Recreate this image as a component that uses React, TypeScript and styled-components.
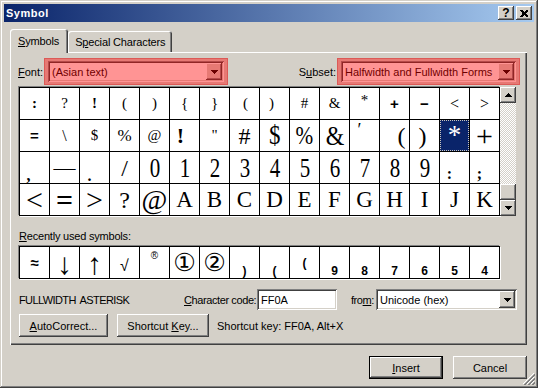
import React from 'react'
import styled, { createGlobalStyle, css } from 'styled-components'

const GlobalStyle = createGlobalStyle`
  html, body {
    margin: 0;
    padding: 0;
    background: #d4d0c8;
  }
  body {
    font-family: 'Liberation Sans', Arial, sans-serif;
    font-size: 11px;
    color: #000;
    white-space: nowrap;
  }
`

const raised = css`
  background: #d4d0c8;
  box-shadow: inset -1px -1px #404040, inset 1px 1px #fff, inset -2px -2px #808080, inset 2px 2px #d4d0c8;
`

const sunken = css`
  box-shadow: inset 1px 1px #808080, inset -1px -1px #fff, inset 2px 2px #404040, inset -2px -2px #d4d0c8;
`

const Window = styled.div`
  position: relative;
  box-sizing: border-box;
  width: 538px;
  height: 388px;
  padding: 4px;
  display: flex;
  flex-direction: column;
  background: #d4d0c8;
  box-shadow: inset -1px -1px #404040, inset 1px 1px #d4d0c8, inset -2px -2px #808080, inset 2px 2px #fff;
`

const TitleBar = styled.div`
  height: 18px;
  padding: 0 2px;
  display: flex;
  align-items: center;
  justify-content: space-between;
  background: linear-gradient(to right, #0a246a, #a6caf0);
`

const Title = styled.span`
  color: #fff;
  font-weight: bold;
  font-size: 11px;
  letter-spacing: 0.5px;
`

const TitleButtons = styled.div`
  display: flex;
  gap: 2px;
`

const TitleButton = styled.div`
  box-sizing: border-box;
  width: 16px;
  height: 14px;
  ${raised};
  display: flex;
  align-items: center;
  justify-content: center;
  font-weight: bold;
  font-size: 12px;
  line-height: 1;
`

const Body = styled.div`
  flex: 1;
  display: flex;
  flex-direction: column;
  padding: 7px 7px 0 6px;
`

const TabStrip = styled.div`
  position: relative;
  z-index: 1;
  height: 23px;
  display: flex;
  align-items: flex-end;
`

const Tab = styled.div<{ $active?: boolean }>`
  box-sizing: border-box;
  height: ${(p) => (p.$active ? 24 : 21)}px;
  margin-bottom: ${(p) => (p.$active ? -1 : 0)}px;
  padding: ${(p) => (p.$active ? '0 9px 1px 8px' : '0 7px 0 7px')};
  display: flex;
  align-items: center;
  letter-spacing: -0.15px;
  background: #d4d0c8;
  border-radius: 3px 3px 0 0;
  box-shadow: inset 1px 1px #fff, inset -1px 0 #404040, inset -2px 0 #808080;
`

const Panel = styled.div`
  box-sizing: border-box;
  width: 517px;
  height: 293px;
  padding: 6px 7px 0 8px;
  display: flex;
  flex-direction: column;
  box-shadow: inset 1px 1px #fff, inset -1px -1px #404040, inset -2px -2px #808080;
`

const Key = styled.span`
  text-decoration: underline;
`

const FontRow = styled.div`
  height: 27px;
  display: flex;
  align-items: center;
  justify-content: space-between;
`

const Field = styled.div`
  display: flex;
  align-items: center;
`

const Highlight = styled.div<{ $w: number }>`
  position: relative;
  box-sizing: border-box;
  width: ${(p) => p.$w}px;
  height: 27px;
  padding: 3px 4px 3px 4px;
  margin-left: 1px;

  &::after {
    content: '';
    position: absolute;
    inset: 0;
    background: rgba(255, 0, 0, 0.42);
    box-shadow: inset 0 0 0 1px rgba(190, 0, 0, 0.25);
    pointer-events: none;
  }
`

const Combo = styled.div<{ $w?: number }>`
  box-sizing: border-box;
  width: ${(p) => (p.$w ? `${p.$w}px` : '100%')};
  height: 21px;
  padding: 2px 2px 2px 4px;
  display: flex;
  align-items: center;
  justify-content: space-between;
  background: #fff;
  ${sunken};
`

const DropButton = styled.div`
  box-sizing: border-box;
  width: 16px;
  height: 17px;
  ${raised};
  display: flex;
  align-items: center;
  justify-content: center;
`

const GridArea = styled.div`
  margin: 2px 0 0 1px;
  display: flex;
`

const SymbolGrid = styled.div`
  display: grid;
  grid-template-columns: repeat(16, 29px);
  grid-auto-rows: 31px;
  gap: 1px;
  padding: 1px;
  background: #000;
  box-shadow: -1px -1px 0 #808080, 1px 1px 0 #fff;
`

const Cell = styled.div<{ $size: number; $sans?: boolean; $bold?: boolean; $sel?: boolean }>`
  display: flex;
  align-items: center;
  justify-content: center;
  overflow: hidden;
  background: ${(p) => (p.$sel ? '#0a246a' : '#fff')};
  color: ${(p) => (p.$sel ? '#fff' : '#000')};
  outline: ${(p) => (p.$sel ? '1px dotted #c8c4bc' : 'none')};
  outline-offset: -1px;
  font-family: ${(p) =>
    p.$sans
      ? "'Liberation Sans', 'DejaVu Sans', sans-serif"
      : "'Liberation Serif', 'DejaVu Serif', 'DejaVu Sans', 'Noto Sans CJK JP', serif"};
  font-size: ${(p) => p.$size}px;
  font-weight: ${(p) => (p.$bold ? 700 : 400)};
  line-height: 1;
`

const Glyph = styled.span`
  display: block;
`

const ScrollBar = styled.div`
  width: 16px;
  display: flex;
  flex-direction: column;
`

const ScrollButton = styled.div`
  box-sizing: border-box;
  width: 16px;
  height: 16px;
  ${raised};
  display: flex;
  align-items: center;
  justify-content: center;
`

const ScrollTrack = styled.div`
  flex: 1;
  background: repeating-conic-gradient(#fff 0 25%, #d4d0c8 0 50%) 0 0 / 2px 2px;
`

const SectionLabel = styled.div`
  margin: 14px 0 0 1px;
  line-height: 13px;
  letter-spacing: -0.2px;
`

const RecentWrap = styled.div`
  margin: 3px 0 0 1px;
  display: flex;
`

const InfoRow = styled.div`
  margin: 10px 0 0 1px;
  height: 21px;
  display: flex;
  align-items: center;
`

const CharName = styled.div`
  width: 165px;
  letter-spacing: -0.6px;
  word-spacing: 2px;
`

const FieldLabel = styled.div<{ $w: number; $right?: boolean }>`
  box-sizing: border-box;
  width: ${(p) => p.$w}px;
  text-align: ${(p) => (p.$right ? 'right' : 'left')};
  padding-right: ${(p) => (p.$right ? 2 : 0)}px;
  letter-spacing: -0.4px;
`

const TextBox = styled.div`
  box-sizing: border-box;
  width: 80px;
  height: 21px;
  padding: 0 4px;
  display: flex;
  align-items: center;
  background: #fff;
  ${sunken};
`

const ButtonRow = styled.div`
  margin: 4px 0 0 1px;
  display: flex;
  align-items: center;
`

const Button = styled.div<{ $w: number; $default?: boolean; $gap?: number }>`
  box-sizing: border-box;
  width: ${(p) => p.$w}px;
  height: 23px;
  margin-left: ${(p) => p.$gap ?? 0}px;
  display: flex;
  align-items: center;
  justify-content: center;
  background: #d4d0c8;
  box-shadow: ${(p) =>
    p.$default
      ? 'inset 0 0 0 1px #000, inset -2px -2px #404040, inset 2px 2px #fff, inset -3px -3px #808080'
      : 'inset -1px -1px #404040, inset 1px 1px #fff, inset -2px -2px #808080, inset 2px 2px #d4d0c8'};
`

const ShortcutText = styled.div`
  margin-left: 8px;
`

const Footer = styled.div`
  margin-top: 11px;
  display: flex;
  justify-content: flex-end;
`

const Grip = styled.div`
  position: absolute;
  right: 3px;
  bottom: 3px;
  width: 12px;
  height: 12px;
`

type Sym = {
  c: string
  size: number
  dx?: number
  dy?: number
  sx?: number
  sans?: boolean
  bold?: boolean
  sel?: boolean
}

const s = (c: string, size: number, o: Partial<Sym> = {}): Sym => ({ c, size, ...o })

const sansBold = { sans: true, bold: true }

const gridRows: Sym[][] = [
  [
    s(':', 15, { bold: true }),
    s('?', 15),
    s('!', 15, { bold: true }),
    s('(', 15),
    s(')', 15),
    s('{', 15),
    s('}', 15),
    s('(', 15, { dx: 1 }),
    s(')', 15, { dx: -3 }),
    s('#', 15),
    s('&', 15),
    s('*', 15, { dy: -3 }),
    s('+', 15, sansBold),
    s('−', 15, sansBold),
    s('<', 16),
    s('>', 16),
  ],
  [
    s('=', 15, sansBold),
    s('\\', 16),
    s('$', 15),
    s('%', 17),
    s('@', 15),
    s('!', 22, { dx: -4, bold: true }),
    s('"', 15),
    s('#', 24),
    s('$', 27, { sx: 0.85 }),
    s('%', 25, { sx: 0.85 }),
    s('&', 28, { sx: 0.85 }),
    s('′', 18, { dx: -5, dy: -6 }),
    s('(', 24, { dx: 7 }),
    s(')', 24, { dx: -2 }),
    s('*', 27, { sel: true }),
    s('+', 30),
  ],
  [
    s(',', 16, { bold: true, dx: -6, dy: 8 }),
    s('—', 22),
    s('.', 16, { bold: true, dx: -5, dy: 8 }),
    s('/', 24),
    ...'0123456789'.split('').map((d) => s(d, 28, { sx: 0.75 })),
    s(':', 16, { bold: true, dx: -5, dy: 6 }),
    s(';', 16, { bold: true, dx: -5, dy: 6 }),
  ],
  [
    s('<', 30),
    s('=', 30, { bold: true }),
    s('>', 30),
    s('?', 24),
    s('@', 28),
    ...'ABCDEFGHIJK'.split('').map((l) => s(l, 23)),
  ],
]

const recent: Sym[] = [
  s('≈', 15, sansBold),
  s('↓', 30, { dy: 1 }),
  s('↑', 30, { dy: 1 }),
  s('√', 16, { sans: true, dy: 3 }),
  s('®', 10, { sans: true, dy: -7 }),
  s('①', 25),
  s('②', 25),
  s(')', 12, { ...sansBold, dy: 8 }),
  s('(', 12, { ...sansBold, dy: 8 }),
  s('(', 12, sansBold),
  ...'987654'.split('').map((d) => s(d, 12, { ...sansBold, dy: 8 })),
]

const Arrow = ({ up }: { up?: boolean }) => (
  <svg width="7" height="4" viewBox="0 0 7 4" shapeRendering="crispEdges" style={up ? { transform: 'scaleY(-1)' } : undefined}>
    <rect x="0" y="0" width="7" height="1" />
    <rect x="1" y="1" width="5" height="1" />
    <rect x="2" y="2" width="3" height="1" />
    <rect x="3" y="3" width="1" height="1" />
  </svg>
)

const CloseGlyph = () => (
  <svg width="8" height="7" viewBox="0 0 8 7" shapeRendering="crispEdges">
    <path d="M0 0h2l2 2 2-2h2v1l-2 2v1l2 2v1h-2l-2-2-2 2h-2v-1l2-2v-1l-2-2z" />
  </svg>
)

const glyphTransform = (sym: Sym) => {
  if (!sym.dx && !sym.dy && !sym.sx) return undefined
  return { transform: `translate(${sym.dx ?? 0}px, ${sym.dy ?? 0}px) scaleX(${sym.sx ?? 1})` }
}

const SymbolCell = ({ sym }: { sym: Sym }) => (
  <Cell $size={sym.size} $sans={sym.sans} $bold={sym.bold} $sel={sym.sel}>
    <Glyph style={glyphTransform(sym)}>{sym.c}</Glyph>
  </Cell>
)

export default function App() {
  return (
    <>
      <GlobalStyle />
      <Window>
        <TitleBar>
          <Title>Symbol</Title>
          <TitleButtons>
            <TitleButton>?</TitleButton>
            <TitleButton>
              <CloseGlyph />
            </TitleButton>
          </TitleButtons>
        </TitleBar>
        <Body>
          <TabStrip>
            <Tab $active>
              <span>
                <Key>S</Key>ymbols
              </span>
            </Tab>
            <Tab>
              <span>
                S<Key>p</Key>ecial Characters
              </span>
            </Tab>
          </TabStrip>
          <Panel>
            <FontRow>
              <Field>
                <span>
                  <Key>F</Key>ont:
                </span>
                <Highlight $w={184}>
                  <Combo>
                    <span>(Asian text)</span>
                    <DropButton>
                      <Arrow />
                    </DropButton>
                  </Combo>
                </Highlight>
              </Field>
              <Field>
                <span>
                  S<Key>u</Key>bset:
                </span>
                <Highlight $w={183}>
                  <Combo>
                    <span>Halfwidth and Fullwidth Forms</span>
                    <DropButton>
                      <Arrow />
                    </DropButton>
                  </Combo>
                </Highlight>
              </Field>
            </FontRow>
            <GridArea>
              <SymbolGrid>
                {gridRows.flat().map((sym, i) => (
                  <SymbolCell key={i} sym={sym} />
                ))}
              </SymbolGrid>
              <ScrollBar>
                <ScrollButton>
                  <Arrow up />
                </ScrollButton>
                <ScrollTrack />
                <ScrollButton />
                <ScrollButton>
                  <Arrow />
                </ScrollButton>
              </ScrollBar>
            </GridArea>
            <SectionLabel>
              <Key>R</Key>ecently used symbols:
            </SectionLabel>
            <RecentWrap>
              <SymbolGrid>
                {recent.map((sym, i) => (
                  <SymbolCell key={i} sym={sym} />
                ))}
              </SymbolGrid>
            </RecentWrap>
            <InfoRow>
              <CharName>FULLWIDTH ASTERISK</CharName>
              <FieldLabel $w={73}>
                <Key>C</Key>haracter code:
              </FieldLabel>
              <TextBox>FF0A</TextBox>
              <FieldLabel $w={39} $right>
                fro<Key>m</Key>:
              </FieldLabel>
              <Combo $w={141}>
                <span>Unicode (hex)</span>
                <DropButton>
                  <Arrow />
                </DropButton>
              </Combo>
            </InfoRow>
            <ButtonRow>
              <Button $w={89}>
                <span>
                  <Key>A</Key>utoCorrect...
                </span>
              </Button>
              <Button $w={92} $gap={9}>
                <span>
                  Shortcut <Key>K</Key>ey...
                </span>
              </Button>
              <ShortcutText>Shortcut key: FF0A, Alt+X</ShortcutText>
            </ButtonRow>
          </Panel>
          <Footer>
            <Button $w={74} $default>
              <span>
                <Key>I</Key>nsert
              </span>
            </Button>
            <Button $w={74} $gap={10}>
              Cancel
            </Button>
          </Footer>
        </Body>
        <Grip>
          <svg width="12" height="12" viewBox="0 0 12 12" shapeRendering="crispEdges">
            <path d="M11 0 L0 11 M11 4 L4 11 M11 8 L8 11" stroke="#fff" strokeWidth="1" />
            <path d="M12 1 L1 12 M12 2 L2 12 M12 5 L5 12 M12 6 L6 12 M12 9 L9 12 M12 10 L10 12" stroke="#808080" strokeWidth="1" />
          </svg>
        </Grip>
      </Window>
    </>
  )
}
